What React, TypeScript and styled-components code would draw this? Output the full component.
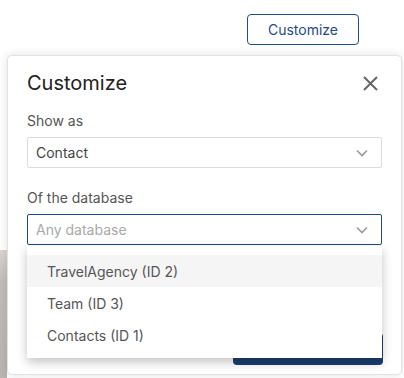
import React from 'react';
import styled, { createGlobalStyle } from 'styled-components';

const GlobalStyle = createGlobalStyle`
  html, body {
    margin: 0;
    padding: 0;
    background: #ffffff;
    font-family: Inter, "Noto Sans", "Liberation Sans", sans-serif;
  }
  * { box-sizing: border-box; }
`;

const Page = styled.div`
  position: relative;
  width: 404px;
  height: 378px;
  overflow: hidden;
  background: #fff;
`;

const TopBar = styled.div`
  display: flex;
  justify-content: flex-end;
  padding: 14px 45px 0 0;
  height: 250px;
`;

const OutlineButton = styled.button`
  width: 112px;
  height: 31px;
  border: 1px solid #234c87;
  border-radius: 4px;
  background: #fff;
  color: #1f4a86;
  font-family: inherit;
  font-size: 14px;
  padding: 0;
`;

const Backdrop = styled.div`
  display: grid;
  grid-template-columns: 7px 1fr;
  height: 128px;
`;

const Photo = styled.div`
  background: linear-gradient(170deg, #d9d5d1 0%, #c2bdb8 25%, #b9b4af 100%);
`;

const Modal = styled.div`
  position: absolute;
  left: 7px;
  top: 55px;
  width: 395px;
  height: 320px;
  background: #fff;
  border: 1px solid #e2e2e2;
  border-radius: 5px;
  box-shadow: 0 0 10px rgba(0, 0, 0, 0.12);
  display: flex;
  flex-direction: column;
`;

const Header = styled.div`
  display: flex;
  align-items: center;
  justify-content: space-between;
  padding: 0 23px 0 19px;
  height: 54px;
`;

const Title = styled.h2`
  margin: 0;
  font-size: 20px;
  font-weight: 400;
  color: #222;
  line-height: 28px;
`;

const CloseButton = styled.button`
  border: 0;
  background: none;
  padding: 0;
  width: 16px;
  height: 16px;
  display: flex;
  align-items: center;
  justify-content: center;
`;

const Body = styled.div`
  padding: 2px 19px 0;
  display: flex;
  flex-direction: column;
`;

const Field = styled.div`
  position: relative;
  display: flex;
  flex-direction: column;
  gap: 8px;
  margin-bottom: 21px;
`;

const Label = styled.label`
  font-size: 14px;
  color: #555;
  line-height: 17px;
`;

const Select = styled.div<{ $focused?: boolean }>`
  height: 31px;
  border: 1px solid ${(p) => (p.$focused ? '#1f4a86' : '#dcdcdc')};
  border-radius: 2px;
  display: flex;
  align-items: center;
  justify-content: space-between;
  padding: 0 13px 0 8px;
`;

const Value = styled.span<{ $placeholder?: boolean }>`
  font-size: 14px;
  color: ${(p) => (p.$placeholder ? '#a9a9a9' : '#444')};
`;

const Menu = styled.ul`
  position: absolute;
  left: 0;
  right: 0;
  top: 100%;
  margin: 1px 0 0;
  padding: 9px 0 7px;
  list-style: none;
  background: #fff;
  box-shadow: 0 4px 10px rgba(0, 0, 0, 0.24);
  z-index: 2;
`;

const MenuItem = styled.li<{ $active?: boolean }>`
  height: 32px;
  display: flex;
  align-items: center;
  padding-left: 20px;
  font-size: 14px;
  color: #555;
  background: ${(p) => (p.$active ? '#f5f5f5' : '#fff')};
`;

const Footer = styled.div`
  margin-top: auto;
  display: flex;
  justify-content: flex-end;
  padding: 0 18px 9px;
`;

const PrimaryButton = styled.button`
  width: 150px;
  height: 32px;
  border: 0;
  border-radius: 4px;
  background: #1b3f70;
  color: #fff;
  font-family: inherit;
  font-size: 14px;
`;

const Chevron = () => (
  <svg width="12" height="8" viewBox="0 0 12 8">
    <path d="M1 1.5l5 5 5-5" fill="none" stroke="#9a9a9a" strokeWidth="1.6" />
  </svg>
);

const CloseIcon = () => (
  <svg width="15" height="15" viewBox="0 0 15 15">
    <path d="M1 1l13 13M14 1L1 14" stroke="#666" strokeWidth="2" />
  </svg>
);

const databases = ['TravelAgency (ID 2)', 'Team (ID 3)', 'Contacts (ID 1)'];

export default function App() {
  return (
    <Page>
      <GlobalStyle />
      <TopBar>
        <OutlineButton>Customize</OutlineButton>
      </TopBar>
      <Backdrop>
        <Photo />
        <div />
      </Backdrop>
      <Modal>
        <Header>
          <Title>Customize</Title>
          <CloseButton aria-label="Close">
            <CloseIcon />
          </CloseButton>
        </Header>
        <Body>
          <Field>
            <Label>Show as</Label>
            <Select>
              <Value>Contact</Value>
              <Chevron />
            </Select>
          </Field>
          <Field>
            <Label>Of the database</Label>
            <Select $focused>
              <Value $placeholder>Any database</Value>
              <Chevron />
            </Select>
            <Menu>
              {databases.map((d, i) => (
                <MenuItem key={d} $active={i === 0}>
                  {d}
                </MenuItem>
              ))}
            </Menu>
          </Field>
        </Body>
        <Footer>
          <PrimaryButton>Save</PrimaryButton>
        </Footer>
      </Modal>
    </Page>
  );
}
